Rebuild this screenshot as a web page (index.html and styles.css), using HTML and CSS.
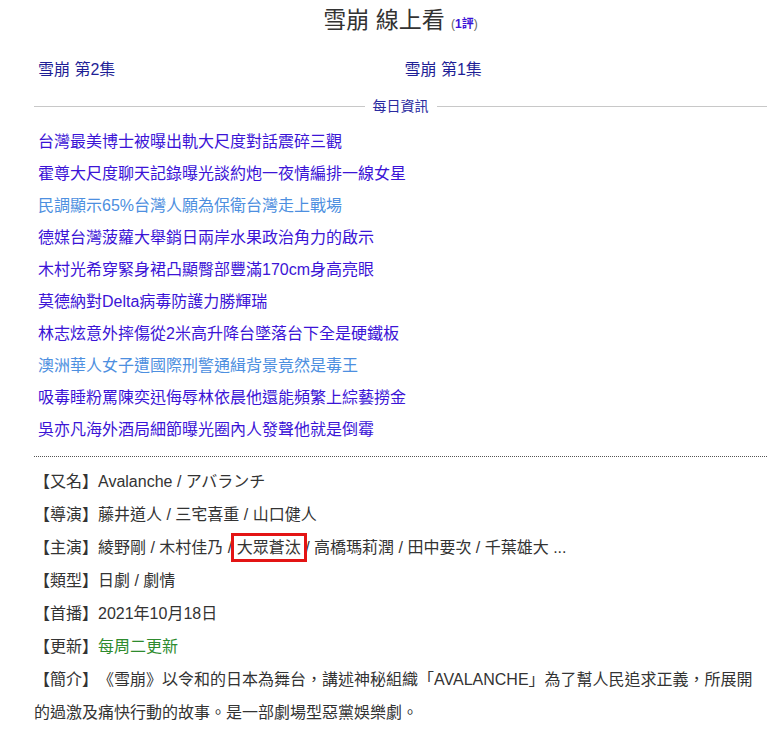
FILE: index.html
```html
<!DOCTYPE html>
<html lang="zh-Hant">
<head>
  <meta charset="UTF-8" />
  <meta name="viewport" content="width=device-width, initial-scale=1.0" />
  <title>雪崩 線上看</title>
  <link rel="stylesheet" href="styles.css">
</head>
<body>

  <h1 class="title">雪崩 線上看 <span class="rate">(<b>1評</b>)</span></h1>

  <div class="episodes">
    <a href="#" class="ep">雪崩 第2集</a>
    <a href="#" class="ep">雪崩 第1集</a>
  </div>

  <div class="divider"><span>每日資訊</span></div>

  <ul class="news">
    <li><a href="#">台灣最美博士被曝出軌大尺度對話震碎三觀</a></li>
    <li><a href="#">霍尊大尺度聊天記錄曝光談約炮一夜情編排一線女星</a></li>
    <li><a href="#" class="seen">民調顯示65%台灣人願為保衛台灣走上戰場</a></li>
    <li><a href="#">德媒台灣菠蘿大舉銷日兩岸水果政治角力的啟示</a></li>
    <li><a href="#">木村光希穿緊身裙凸顯臀部豐滿170cm身高亮眼</a></li>
    <li><a href="#">莫德納對Delta病毒防護力勝輝瑞</a></li>
    <li><a href="#">林志炫意外摔傷從2米高升降台墜落台下全是硬鐵板</a></li>
    <li><a href="#" class="seen">澳洲華人女子遭國際刑警通緝背景竟然是毒王</a></li>
    <li><a href="#">吸毒睡粉罵陳奕迅侮辱林依晨他還能頻繁上綜藝撈金</a></li>
    <li><a href="#">吳亦凡海外酒局細節曝光圈內人發聲他就是倒霉</a></li>
  </ul>

  <div class="info">
    <p>【又名】Avalanche / アバランチ</p>
    <p>【導演】藤井道人 / 三宅喜重 / 山口健人</p>
    <p>【主演】綾野剛 / 木村佳乃 / <span class="mark">大眾蒼汰</span> / 高橋瑪莉潤 / 田中要次 / 千葉雄大 ...</p>
    <p>【類型】日劇 / 劇情</p>
    <p>【首播】2021年10月18日</p>
    <p>【更新】<span class="update">每周二更新</span></p>
    <p>【簡介】《雪崩》以令和的日本為舞台，講述神秘組織「AVALANCHE」為了幫人民追求正義，所展開的過激及痛快行動的故事。是一部劇場型惡黨娛樂劇。</p>
  </div>

</body>
</html>
```

FILE: styles.css
```css
body {
  font-family: 'Liberation Sans', 'Noto Sans CJK TC', sans-serif;
  color: #333;
  background: #fff;
  margin: 0;
  padding: 0 17px 0 34px;
  text-spacing-trim: space-all;
}
a { text-decoration: none; }

.title {
  font-size: 23px;
  font-weight: normal;
  text-align: center;
  margin: 0;
  padding-top: 6px;
  line-height: 28px;
}
.rate {
  font-size: 12px;
  color: #666;
}
.rate b { color: #3b14d6; }

.episodes {
  display: grid;
  grid-template-columns: 1fr 1fr;
  margin-top: 20px;
  line-height: 24px;
}
.ep {
  color: #1f1f96;
  font-size: 16px;
  padding-left: 4px;
}

.divider {
  display: flex;
  align-items: center;
  gap: 8px;
  margin-top: 14px;
  font-size: 14px;
  color: #2a2aa0;
  line-height: 20px;
}
.divider::before,
.divider::after {
  content: "";
  flex: 1;
  border-top: 1px solid #c8c8c8;
}

.news {
  list-style: none;
  margin: 10px 0 0;
  padding: 0 0 10px 4px;
  border-bottom: 1px dotted #555;
}
.news li {
  line-height: 32px;
  font-size: 16px;
}
.news a { color: #3b14d6; }
.news a.seen { color: #4d8fe0; }

.info { padding-top: 8px; }
.info p {
  margin: 0;
  font-size: 16px;
  line-height: 33px;
}
.mark {
  outline: 3px solid #e31414;
  outline-offset: 3px;
}
.update { color: #2e8b2e; }
```
